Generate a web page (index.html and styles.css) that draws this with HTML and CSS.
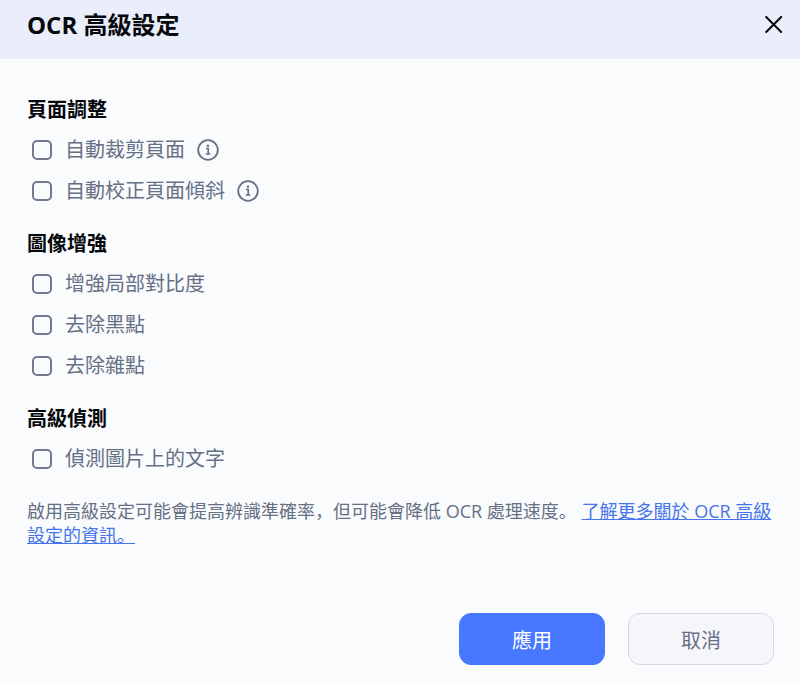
FILE: index.html
```html
<!DOCTYPE html>
<html lang="zh-CN">
<head>
  <meta charset="UTF-8">
  <meta name="viewport" content="width=device-width, initial-scale=1">
  <title>OCR 高級設定</title>
  <link rel="stylesheet" href="styles.css">
</head>
<body>

<header class="dialog-header">
  <h1>OCR 高級設定</h1>
  <button type="button" class="close" aria-label="關閉">
    <svg width="18" height="18" viewBox="0 0 18 18" fill="none" stroke="currentColor" stroke-width="2" stroke-linecap="round">
      <path d="M1.2 1L16.2 16M16.2 1L1.2 16"/>
    </svg>
  </button>
</header>

<main class="dialog-body">
  <section class="group">
    <h2>頁面調整</h2>
    <div class="option">
      <input type="checkbox" id="crop">
      <label for="crop">自動裁剪頁面</label>
      <svg class="info" width="22" height="22" viewBox="0 0 22 22" fill="none" stroke="currentColor">
        <circle cx="11" cy="11" r="9.8" stroke-width="1.8"/>
        <path d="M9 9.5H11.2V15M8.8 15H13.4" stroke-width="1.6"/>
        <circle cx="11" cy="6.8" r="1.2" fill="currentColor" stroke="none"/>
      </svg>
    </div>
    <div class="option">
      <input type="checkbox" id="deskew">
      <label for="deskew">自動校正頁面傾斜</label>
      <svg class="info" width="22" height="22" viewBox="0 0 22 22" fill="none" stroke="currentColor">
        <circle cx="11" cy="11" r="9.8" stroke-width="1.8"/>
        <path d="M9 9.5H11.2V15M8.8 15H13.4" stroke-width="1.6"/>
        <circle cx="11" cy="6.8" r="1.2" fill="currentColor" stroke="none"/>
      </svg>
    </div>
  </section>

  <section class="group">
    <h2>圖像增強</h2>
    <div class="option">
      <input type="checkbox" id="contrast">
      <label for="contrast">增強局部對比度</label>
    </div>
    <div class="option">
      <input type="checkbox" id="spots">
      <label for="spots">去除黑點</label>
    </div>
    <div class="option">
      <input type="checkbox" id="noise">
      <label for="noise">去除雜點</label>
    </div>
  </section>

  <section class="group">
    <h2>高級偵測</h2>
    <div class="option">
      <input type="checkbox" id="detect">
      <label for="detect">偵測圖片上的文字</label>
    </div>
  </section>

  <p class="note">啟用高級設定可能會提高辨識準確率，但可能會降低 OCR 處理速度。 <a href="#">了解更多關於 OCR 高級設定的資訊。</a></p>
</main>

<footer class="actions">
  <button type="button" class="btn primary">應用</button>
  <button type="button" class="btn">取消</button>
</footer>

</body>
</html>
```

FILE: styles.css
```css
* {
  box-sizing: border-box;
}

body {
  margin: 0;
  font-family: "Open Sans", "Noto Sans CJK SC", sans-serif;
  font-size: 20px;
  background-color: #f9fbfd;
  color: #667085;
}

/* Header */
.dialog-header {
  display: flex;
  justify-content: space-between;
  align-items: center;
  padding: 7px 8px 16px 27px;
  background-color: #e9eefa;
  color: #06080c;
}

h1 {
  margin: 0;
  font-size: 24px;
  font-weight: 700;
  line-height: 36px;
}

.close {
  display: flex;
  padding: 9px;
  border: none;
  background: none;
  color: inherit;
  cursor: pointer;
}

/* Options */
.dialog-body {
  padding: 36px 27px 0;
}

.group {
  margin-bottom: 18px;
}

h2 {
  margin: 0 0 4px;
  font-size: 20px;
  font-weight: 700;
  line-height: 30px;
  color: #06080c;
}

.option {
  display: flex;
  align-items: center;
  height: 41px;
  padding-left: 5px;
}

.option input {
  appearance: none;
  width: 20px;
  height: 20px;
  margin: 0 13px 0 0;
  border: 2px solid #717a8e;
  border-radius: 5px;
  cursor: pointer;
}

.option input:checked {
  background-color: #4878ff;
  border-color: #4878ff;
}

.option label {
  line-height: 30px;
  cursor: pointer;
}

.info {
  margin-left: 12px;
}

.note {
  margin: 20px 0 0;
  font-size: 18px;
  line-height: 24px;
}

.note a {
  color: #4674ea;
}

/* Buttons */
.actions {
  display: flex;
  justify-content: flex-end;
  gap: 23px;
  padding: 66px 26px 20px;
}

.btn {
  width: 146px;
  height: 52px;
  border: 1px solid #d6d9e3;
  border-radius: 12px;
  background-color: #f5f6fa;
  color: #667085;
  font-family: inherit;
  font-size: 20px;
  cursor: pointer;
}

.primary {
  border-color: #4878ff;
  background-color: #4878ff;
  color: #fff;
}
```
